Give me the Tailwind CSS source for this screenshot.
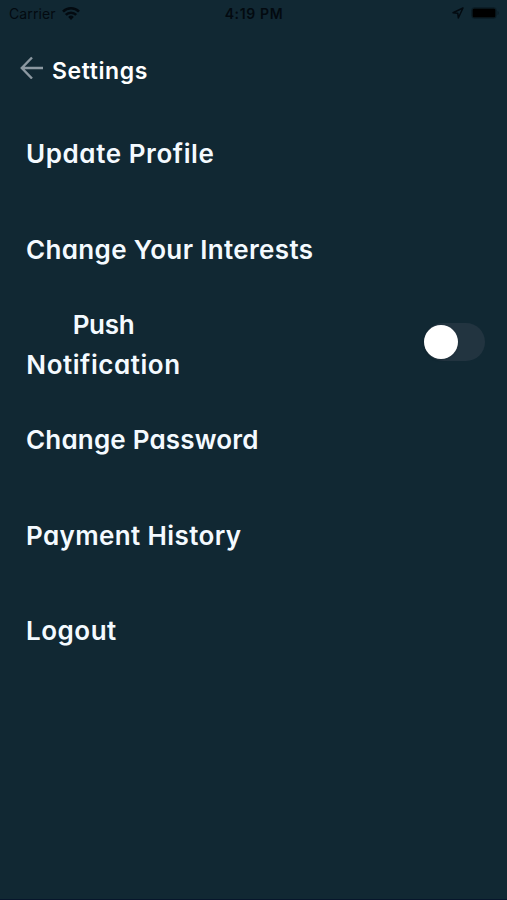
<!DOCTYPE html>
<html lang="en">
<head>
<meta charset="utf-8">
<meta name="viewport" content="width=device-width, initial-scale=1">
<title>Settings</title>
<script src="https://cdn.jsdelivr.net/npm/@tailwindcss/browser@4"></script>
</head>
<body class="bg-[#112833]">
<div class="flex h-[900px] w-[507px] flex-col overflow-hidden border-b border-[#07162c] font-['Inter','Lato',sans-serif] text-[#f4faff]">
  <header class="grid h-[26px] grid-cols-3 items-center pr-[8px] pl-[9px] text-[#030a10]">
    <div class="flex items-center gap-[6px] text-[14px]">
      <span class="tracking-[0.1px]">Carrier</span>
      <svg class="h-[13px] w-[18px]" viewBox="0 0 18 13" fill="none" stroke="currentColor" stroke-width="2.6"><path d="M1 4.6a11.4 11.4 0 0 1 16 0M3.8 7.9a7.2 7.2 0 0 1 10.4 0"/><path d="M6.2 9.9a4 4 0 0 1 5.6 0L9 13z" fill="currentColor" stroke="none"/></svg>
    </div>
    <div class="text-center text-[14px] font-semibold tracking-[0.65px] whitespace-nowrap">4:19 PM</div>
    <div class="flex items-center justify-end gap-[7px]">
      <svg class="h-3 w-3" viewBox="0 0 12 12" fill="none" stroke="currentColor" stroke-width="1.5" stroke-linejoin="round"><path d="M11 1 1 5.7l4.8.5.5 4.8z"/></svg>
      <svg class="h-3 w-7" viewBox="0 0 28 12"><rect x=".5" y=".5" width="25" height="11" rx="3" fill="none" stroke="currentColor" stroke-opacity=".3"/><rect x="1.5" y="1.5" width="23" height="9" rx="1.5" fill="#000"/><path d="M26.5 4v4q1.3-.5 1.3-2t-1.3-2" fill="currentColor" fill-opacity=".4"/></svg>
    </div>
  </header>
  <nav class="flex h-[80px] items-center pt-[2px] pl-[20px]">
    <svg class="h-6 w-6" viewBox="0 0 24 24" fill="none" stroke="#8c98a1" stroke-width="2.4"><path d="M23 13H2M12 2.5 1.8 13 12 23.5"/></svg>
    <h1 class="pt-[8px] pl-2 text-[23px] font-[580] tracking-[0.6px] text-white [font-feature-settings:'cv11']">Settings</h1>
  </nav>
  <main class="flex flex-col text-[26px] leading-[40px] font-[560] [font-feature-settings:'cv11']">
    <div class="flex h-[95.4px] items-center pl-[26px] tracking-[0.58px]"><span>Update Profile</span></div>
    <div class="flex h-[95.4px] items-center pt-px pl-[26px] tracking-[0.35px]"><span>Change Your Interests</span></div>
    <div class="flex h-[95.4px] items-center justify-between pr-[22px] pl-[26px]">
      <span class="w-[155px] pt-[2px] text-center whitespace-nowrap tracking-[0.55px]"><span class="tracking-[-0.3px]">Push</span><br>Notification</span>
      <button class="mb-1 flex h-[38px] w-[61px] items-center rounded-full bg-[#223440]" aria-label="Push notification"><span class="size-[34px] rounded-full bg-white shadow"></span></button>
    </div>
    <div class="flex h-[95.4px] items-center pl-[26px] tracking-[0.18px]"><span>Change Password</span></div>
    <div class="flex h-[95.4px] items-center pt-px pl-[26px] tracking-[0.38px]"><span>Payment History</span></div>
    <div class="flex h-[95.4px] items-center pl-[26px] tracking-[0.5px]"><span>Logout</span></div>
  </main>
</div>
</body>
</html>
